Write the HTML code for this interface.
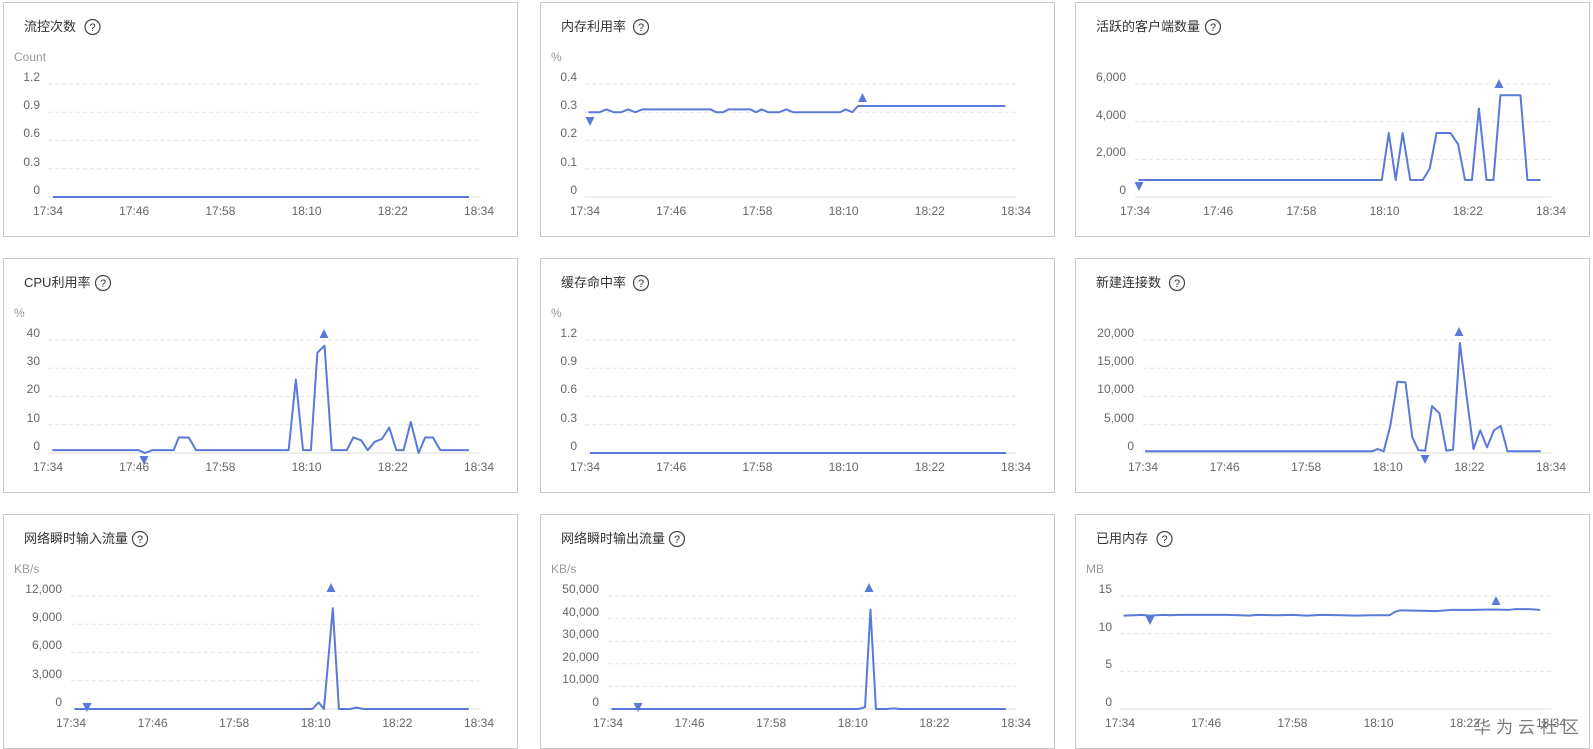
<!DOCTYPE html>
<html><head><meta charset="utf-8">
<style>
html,body{margin:0;padding:0;background:#fff;width:1593px;height:749px;overflow:hidden;position:relative;font-family:"Liberation Sans","Noto Sans CJK SC",sans-serif}
.card{position:absolute;width:513px;height:233px;border:1px solid #c8c8c8;background:#fff}
.card svg{position:absolute;left:-1px;top:-1px;overflow:visible}
.t{font-size:13px;fill:#333}
.u{font-size:12px;fill:#999}
.y{font-size:12px;fill:#666;text-anchor:end}
.x{font-size:12px;fill:#666;text-anchor:middle}
.g{stroke:#e3e3e3;stroke-width:1;stroke-dasharray:4 3}
.a{stroke:#ddd;stroke-width:1}
.l{fill:none;stroke:#5b79d9;stroke-width:2;stroke-linejoin:round}
.m{fill:#5b79d9}
.q{font-size:11px;fill:#333;text-anchor:middle}
.wm{position:absolute;left:1474px;top:713px;font-size:17px;letter-spacing:5px;color:#666;font-family:"Liberation Sans","Noto Sans CJK SC",sans-serif;opacity:.85}
</style></head><body>

<div class="card" style="left:3px;top:2px"><svg width="515" height="235">
<text x="21" y="29" class="t">流控次数</text>
<circle cx="89.5" cy="25" r="7.5" fill="none" stroke="#444" stroke-width="1.2"/><text x="89.5" y="29" class="q">?</text>
<text x="11" y="59" class="u">Count</text>
<line x1="45" x2="476" y1="82" y2="82" class="g"/><line x1="45" x2="476" y1="110.25" y2="110.25" class="g"/><line x1="45" x2="476" y1="138.5" y2="138.5" class="g"/><line x1="45" x2="476" y1="166.75" y2="166.75" class="g"/><line x1="45" x2="476" y1="195" y2="195" class="a"/>
<text x="37" y="79" class="y">1.2</text><text x="37" y="107" class="y">0.9</text><text x="37" y="135" class="y">0.6</text><text x="37" y="164" class="y">0.3</text><text x="37" y="192" class="y">0</text>
<text x="45" y="213" class="x">17:34</text><text x="131.2" y="213" class="x">17:46</text><text x="217.4" y="213" class="x">17:58</text><text x="303.6" y="213" class="x">18:10</text><text x="389.8" y="213" class="x">18:22</text><text x="476" y="213" class="x">18:34</text>
<line x1="50" x2="466" y1="195" y2="195" class="l"/>
</svg></div>

<div class="card" style="left:540px;top:2px"><svg width="515" height="235">
<text x="21" y="29" class="t">内存利用率</text>
<circle cx="101" cy="25" r="7.5" fill="none" stroke="#444" stroke-width="1.2"/><text x="101" y="29" class="q">?</text>
<text x="11" y="59" class="u">%</text>
<line x1="45" x2="476" y1="82" y2="82" class="g"/><line x1="45" x2="476" y1="110.25" y2="110.25" class="g"/><line x1="45" x2="476" y1="138.5" y2="138.5" class="g"/><line x1="45" x2="476" y1="166.75" y2="166.75" class="g"/><line x1="45" x2="476" y1="195" y2="195" class="a"/>
<text x="37" y="79" class="y">0.4</text><text x="37" y="107" class="y">0.3</text><text x="37" y="135" class="y">0.2</text><text x="37" y="164" class="y">0.1</text><text x="37" y="192" class="y">0</text>
<text x="45" y="213" class="x">17:34</text><text x="131.2" y="213" class="x">17:46</text><text x="217.4" y="213" class="x">17:58</text><text x="303.6" y="213" class="x">18:10</text><text x="389.8" y="213" class="x">18:22</text><text x="476" y="213" class="x">18:34</text>
<svg x="45" y="82" width="431" height="113" viewBox="0 -0.4 60 0.4" preserveAspectRatio="none" overflow="visible"><polyline class="l" vector-effect="non-scaling-stroke" points="0.5,-0.30 2,-0.30 3,-0.31 4,-0.30 5,-0.30 6,-0.31 7,-0.30 8,-0.31 17.5,-0.31 18.3,-0.30 19.2,-0.30 20,-0.31 23,-0.31 23.8,-0.30 24.6,-0.31 25.5,-0.30 27,-0.30 28,-0.31 29,-0.30 35.5,-0.30 36.3,-0.31 37.2,-0.30 38,-0.322 58.5,-0.322"/></svg>
<polygon class="m" points="45.5,115 54.5,115 50,124"/><polygon class="m" points="318,100 327,100 322.5,91"/>
</svg></div>

<div class="card" style="left:1075px;top:2px"><svg width="515" height="235">
<text x="21" y="29" class="t">活跃的客户端数量</text>
<circle cx="138" cy="25" r="7.5" fill="none" stroke="#444" stroke-width="1.2"/><text x="138" y="29" class="q">?</text>
<line x1="60" x2="476" y1="82" y2="82" class="g"/><line x1="60" x2="476" y1="119.67" y2="119.67" class="g"/><line x1="60" x2="476" y1="157.33" y2="157.33" class="g"/><line x1="60" x2="476" y1="195" y2="195" class="a"/>
<text x="51" y="79" class="y">6,000</text><text x="51" y="117" class="y">4,000</text><text x="51" y="154" class="y">2,000</text><text x="51" y="192" class="y">0</text>
<text x="60" y="213" class="x">17:34</text><text x="143.2" y="213" class="x">17:46</text><text x="226.4" y="213" class="x">17:58</text><text x="309.6" y="213" class="x">18:10</text><text x="392.8" y="213" class="x">18:22</text><text x="476" y="213" class="x">18:34</text>
<svg x="60" y="82" width="416" height="113" viewBox="0 -6000 60 6000" preserveAspectRatio="none" overflow="visible"><polyline class="l" vector-effect="non-scaling-stroke" points="0.5,-900 35.6,-900 36.6,-3400 37.6,-900 38.6,-3400 39.7,-900 41.5,-900 42.5,-1500 43.5,-3400 45.5,-3400 46.6,-2800 47.6,-900 48.6,-900 49.6,-4700 50.7,-900 51.7,-900 52.7,-5400 55.6,-5400 56.6,-900 58.5,-900"/></svg>
<polygon class="m" points="59.5,180 68.5,180 64,189"/><polygon class="m" points="419.5,86 428.5,86 424,77"/>
</svg></div>

<div class="card" style="left:3px;top:258px"><svg width="515" height="235">
<text x="21" y="29" class="t">CPU利用率</text>
<circle cx="100" cy="25" r="7.5" fill="none" stroke="#444" stroke-width="1.2"/><text x="100" y="29" class="q">?</text>
<text x="11" y="59" class="u">%</text>
<line x1="45" x2="476" y1="82" y2="82" class="g"/><line x1="45" x2="476" y1="110.25" y2="110.25" class="g"/><line x1="45" x2="476" y1="138.5" y2="138.5" class="g"/><line x1="45" x2="476" y1="166.75" y2="166.75" class="g"/><line x1="45" x2="476" y1="195" y2="195" class="a"/>
<text x="37" y="79" class="y">40</text><text x="37" y="107" class="y">30</text><text x="37" y="135" class="y">20</text><text x="37" y="164" class="y">10</text><text x="37" y="192" class="y">0</text>
<text x="45" y="213" class="x">17:34</text><text x="131.2" y="213" class="x">17:46</text><text x="217.4" y="213" class="x">17:58</text><text x="303.6" y="213" class="x">18:10</text><text x="389.8" y="213" class="x">18:22</text><text x="476" y="213" class="x">18:34</text>
<svg x="45" y="82" width="431" height="113" viewBox="0 -40 60 40" preserveAspectRatio="none" overflow="visible"><polyline class="l" vector-effect="non-scaling-stroke" points="0.6,-1 12.6,-1 13.5,0 14.5,-1 17.5,-1 18.2,-5.5 19.6,-5.5 20.6,-1 33.5,-1 34.5,-26 35.5,-1 36.6,-1 37.5,-35.5 38.5,-38 39.5,-1 41.6,-1 42.5,-5.5 43.6,-4.5 44.5,-1 45.5,-4 46.5,-5 47.5,-9 48.5,-1 49.5,-1 50.5,-11 51.6,0 52.5,-5.5 53.6,-5.5 54.6,-1 58.6,-1"/></svg>
<polygon class="m" points="136.5,198 145.5,198 141,207"/><polygon class="m" points="316.5,80 325.5,80 321,71"/>
</svg></div>

<div class="card" style="left:540px;top:258px"><svg width="515" height="235">
<text x="21" y="29" class="t">缓存命中率</text>
<circle cx="101" cy="25" r="7.5" fill="none" stroke="#444" stroke-width="1.2"/><text x="101" y="29" class="q">?</text>
<text x="11" y="59" class="u">%</text>
<line x1="45" x2="476" y1="82" y2="82" class="g"/><line x1="45" x2="476" y1="110.25" y2="110.25" class="g"/><line x1="45" x2="476" y1="138.5" y2="138.5" class="g"/><line x1="45" x2="476" y1="166.75" y2="166.75" class="g"/><line x1="45" x2="476" y1="195" y2="195" class="a"/>
<text x="37" y="79" class="y">1.2</text><text x="37" y="107" class="y">0.9</text><text x="37" y="135" class="y">0.6</text><text x="37" y="164" class="y">0.3</text><text x="37" y="192" class="y">0</text>
<text x="45" y="213" class="x">17:34</text><text x="131.2" y="213" class="x">17:46</text><text x="217.4" y="213" class="x">17:58</text><text x="303.6" y="213" class="x">18:10</text><text x="389.8" y="213" class="x">18:22</text><text x="476" y="213" class="x">18:34</text>
<line x1="50" x2="466" y1="195" y2="195" class="l"/>
</svg></div>

<div class="card" style="left:1075px;top:258px"><svg width="515" height="235">
<text x="21" y="29" class="t">新建连接数</text>
<circle cx="102" cy="25" r="7.5" fill="none" stroke="#444" stroke-width="1.2"/><text x="102" y="29" class="q">?</text>
<line x1="68" x2="476" y1="82" y2="82" class="g"/><line x1="68" x2="476" y1="110.25" y2="110.25" class="g"/><line x1="68" x2="476" y1="138.5" y2="138.5" class="g"/><line x1="68" x2="476" y1="166.75" y2="166.75" class="g"/><line x1="68" x2="476" y1="195" y2="195" class="a"/>
<text x="59" y="79" class="y">20,000</text><text x="59" y="107" class="y">15,000</text><text x="59" y="135" class="y">10,000</text><text x="59" y="164" class="y">5,000</text><text x="59" y="192" class="y">0</text>
<text x="68" y="213" class="x">17:34</text><text x="149.6" y="213" class="x">17:46</text><text x="231.2" y="213" class="x">17:58</text><text x="312.8" y="213" class="x">18:10</text><text x="394.4" y="213" class="x">18:22</text><text x="476" y="213" class="x">18:34</text>
<svg x="68" y="82" width="408" height="113" viewBox="0 -20000 60 20000" preserveAspectRatio="none" overflow="visible"><polyline class="l" vector-effect="non-scaling-stroke" points="0.3,-300 33.7,-300 34.5,-700 35.4,-300 36.4,-5000 37.4,-12600 38.6,-12500 39.6,-2800 40.5,-500 41.5,-400 42.5,-8300 43.6,-7000 44.6,-400 45.6,-600 46.6,-19500 47.6,-10000 48.6,-700 49.6,-4000 50.6,-1000 51.6,-4000 52.6,-4800 53.6,-300 58.5,-300"/></svg>
<polygon class="m" points="345.5,197 354.5,197 350,206"/><polygon class="m" points="379.5,78 388.5,78 384,69"/>
</svg></div>

<div class="card" style="left:3px;top:514px"><svg width="515" height="235">
<text x="21" y="29" class="t">网络瞬时输入流量</text>
<circle cx="137" cy="25" r="7.5" fill="none" stroke="#444" stroke-width="1.2"/><text x="137" y="29" class="q">?</text>
<text x="11" y="59" class="u">KB/s</text>
<line x1="68" x2="476" y1="82" y2="82" class="g"/><line x1="68" x2="476" y1="110.25" y2="110.25" class="g"/><line x1="68" x2="476" y1="138.5" y2="138.5" class="g"/><line x1="68" x2="476" y1="166.75" y2="166.75" class="g"/><line x1="68" x2="476" y1="195" y2="195" class="a"/>
<text x="59" y="79" class="y">12,000</text><text x="59" y="107" class="y">9,000</text><text x="59" y="135" class="y">6,000</text><text x="59" y="164" class="y">3,000</text><text x="59" y="192" class="y">0</text>
<text x="68" y="213" class="x">17:34</text><text x="149.6" y="213" class="x">17:46</text><text x="231.2" y="213" class="x">17:58</text><text x="312.8" y="213" class="x">18:10</text><text x="394.4" y="213" class="x">18:22</text><text x="476" y="213" class="x">18:34</text>
<svg x="68" y="82" width="408" height="113" viewBox="0 -12000 60 12000" preserveAspectRatio="none" overflow="visible"><polyline class="l" vector-effect="non-scaling-stroke" points="0.5,0 35.5,0 36.4,-700 37.2,0 38.5,-10700 39.4,0 41,0 42,-150 43,0 58.5,0"/></svg>
<polygon class="m" points="79.5,189 88.5,189 84,198"/><polygon class="m" points="323.5,78 332.5,78 328,69"/>
</svg></div>

<div class="card" style="left:540px;top:514px"><svg width="515" height="235">
<text x="21" y="29" class="t">网络瞬时输出流量</text>
<circle cx="137" cy="25" r="7.5" fill="none" stroke="#444" stroke-width="1.2"/><text x="137" y="29" class="q">?</text>
<text x="11" y="59" class="u">KB/s</text>
<line x1="68" x2="476" y1="82" y2="82" class="g"/><line x1="68" x2="476" y1="104.6" y2="104.6" class="g"/><line x1="68" x2="476" y1="127.2" y2="127.2" class="g"/><line x1="68" x2="476" y1="149.8" y2="149.8" class="g"/><line x1="68" x2="476" y1="172.4" y2="172.4" class="g"/><line x1="68" x2="476" y1="195" y2="195" class="a"/>
<text x="59" y="79" class="y">50,000</text><text x="59" y="102" class="y">40,000</text><text x="59" y="124" class="y">30,000</text><text x="59" y="147" class="y">20,000</text><text x="59" y="169" class="y">10,000</text><text x="59" y="192" class="y">0</text>
<text x="68" y="213" class="x">17:34</text><text x="149.6" y="213" class="x">17:46</text><text x="231.2" y="213" class="x">17:58</text><text x="312.8" y="213" class="x">18:10</text><text x="394.4" y="213" class="x">18:22</text><text x="476" y="213" class="x">18:34</text>
<svg x="68" y="82" width="408" height="113" viewBox="0 -50000 60 50000" preserveAspectRatio="none" overflow="visible"><polyline class="l" vector-effect="non-scaling-stroke" points="0.5,0 36.8,0 37.8,-800 38.6,-44000 39.4,0 41,0 42,-300 43,0 58.5,0"/></svg>
<polygon class="m" points="93.5,189 102.5,189 98,198"/><polygon class="m" points="324.5,78 333.5,78 329,69"/>
</svg></div>

<div class="card" style="left:1075px;top:514px"><svg width="515" height="235">
<text x="21" y="29" class="t">已用内存</text>
<circle cx="89.5" cy="25" r="7.5" fill="none" stroke="#444" stroke-width="1.2"/><text x="89.5" y="29" class="q">?</text>
<text x="11" y="59" class="u">MB</text>
<line x1="45" x2="476" y1="82" y2="82" class="g"/><line x1="45" x2="476" y1="119.67" y2="119.67" class="g"/><line x1="45" x2="476" y1="157.33" y2="157.33" class="g"/><line x1="45" x2="476" y1="195" y2="195" class="a"/>
<text x="37" y="79" class="y">15</text><text x="37" y="117" class="y">10</text><text x="37" y="154" class="y">5</text><text x="37" y="192" class="y">0</text>
<text x="45" y="213" class="x">17:34</text><text x="131.2" y="213" class="x">17:46</text><text x="217.4" y="213" class="x">17:58</text><text x="303.6" y="213" class="x">18:10</text><text x="389.8" y="213" class="x">18:22</text><text x="476" y="213" class="x">18:34</text>
<svg x="45" y="82" width="431" height="113" viewBox="0 -15 60 15" preserveAspectRatio="none" overflow="visible"><polyline class="l" vector-effect="non-scaling-stroke" points="0.5,-12.4 2,-12.45 3,-12.5 4,-12.4 5,-12.45 6,-12.5 7,-12.45 8,-12.5 12,-12.5 15,-12.5 18,-12.4 19,-12.5 22,-12.45 24,-12.5 26,-12.4 28,-12.5 31,-12.45 33,-12.4 35,-12.45 37.5,-12.45 38.3,-12.9 39,-13.1 42,-13.05 44,-13 46,-13.15 49,-13.15 52,-13.2 54,-13.15 55,-13.25 57,-13.25 58.5,-13.15"/></svg>
<polygon class="m" points="70.5,102 79.5,102 75,111"/><polygon class="m" points="416.5,91 425.5,91 421,82"/>
</svg></div>

<div class="wm">华为云社区</div>
</body></html>
